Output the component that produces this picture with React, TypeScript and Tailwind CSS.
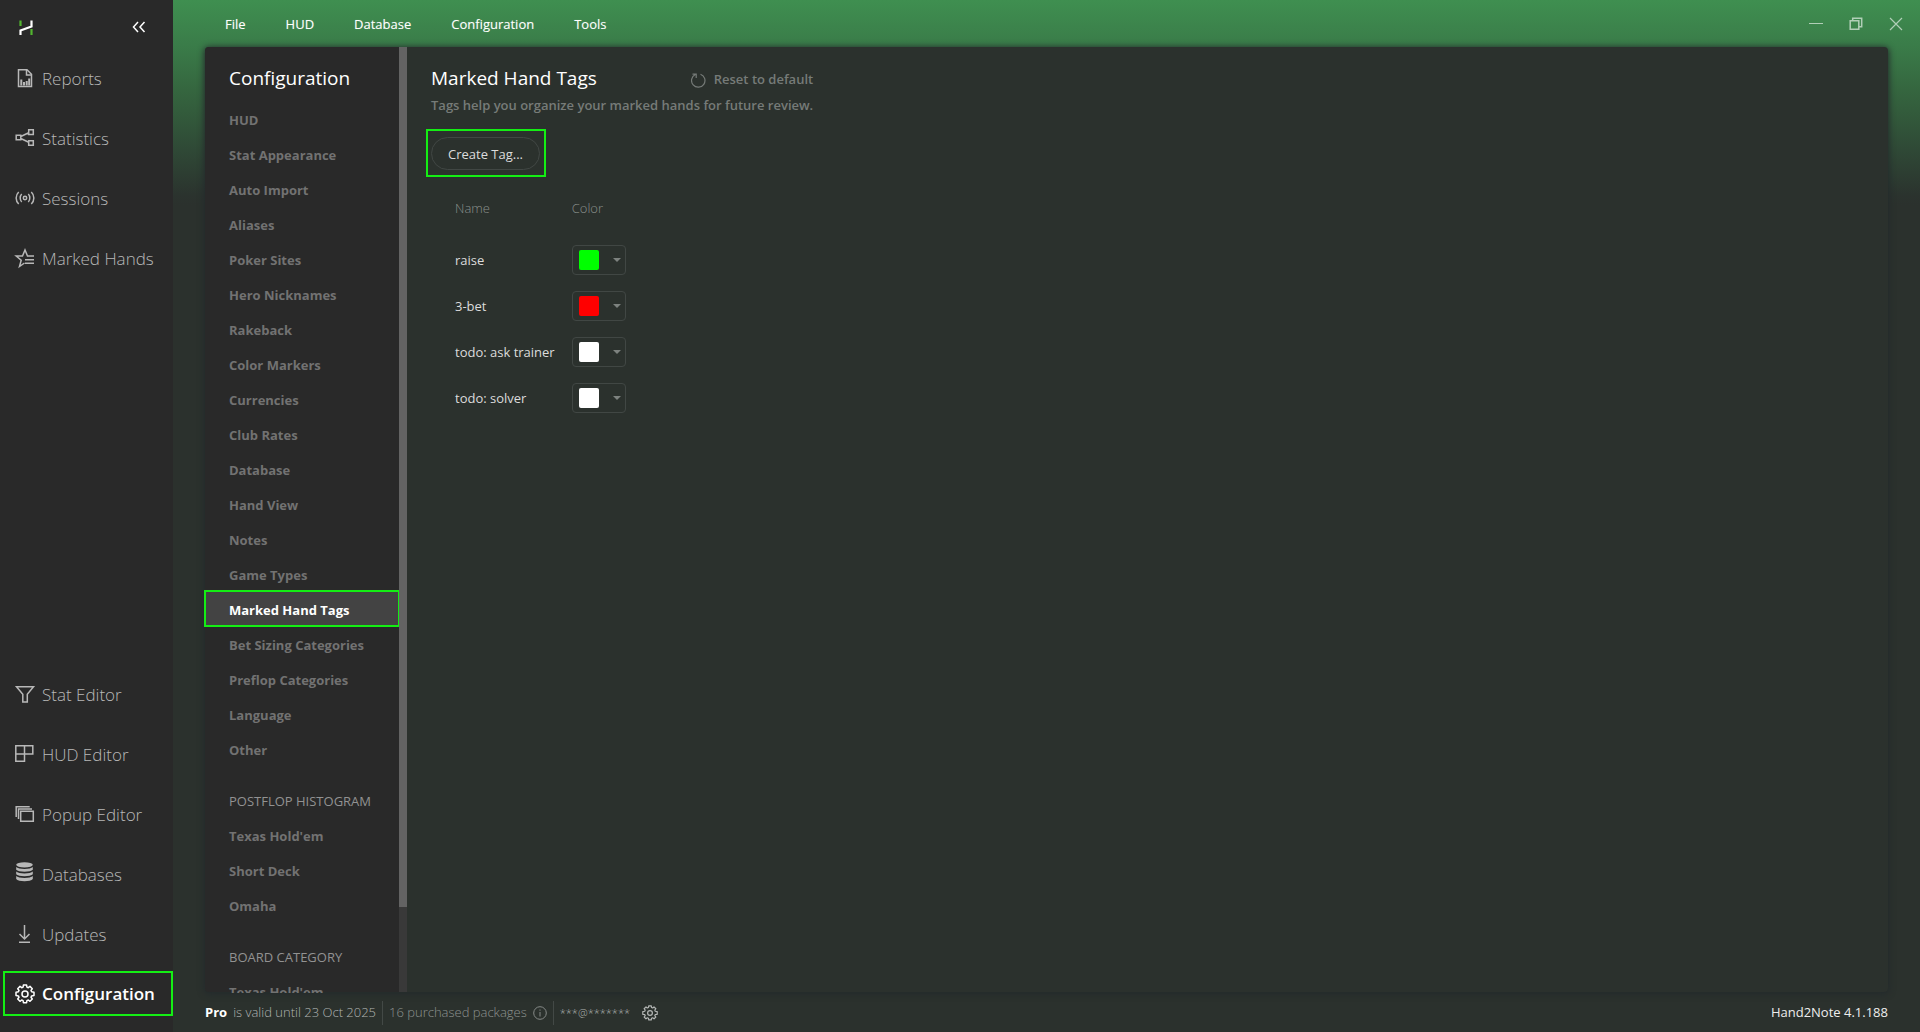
import React from "react";

type IconProps = { children: React.ReactNode; className?: string };

function Icon({ children, className = "h-5 w-5" }: IconProps) {
  return (
    <svg viewBox="0 0 20 20" className={"shrink-0 overflow-visible " + className} fill="none" stroke="currentColor" strokeWidth="1.5" aria-hidden="true">
      {children}
    </svg>
  );
}

const GEAR =
  "M8.4 1h3.2l.3 2.1 1.4.6 1.7-1.3 2.3 2.3-1.3 1.7.6 1.4 2.4.4v3.4l-2.4.3-.6 1.4 1.3 1.7-2.3 2.3-1.7-1.3-1.4.6-.3 2.1H8.4l-.3-2.1-1.4-.6L5 17.3 2.7 15 4 13.3l-.6-1.400L1 11.6V8.2l2.400-.4.6-1.4L2.7 4.7 5 2.4l1.7 1.3 1.4-.6z";

function GearIcon({ className }: { className?: string }) {
  return (
    <Icon className={className}>
      <path d={GEAR} strokeLinejoin="round" />
      <circle cx="10" cy="10" r="3" />
    </Icon>
  );
}

const topItems = [
  {
    label: "Reports",
    icon: (
      <Icon>
        <path d="M3.5.8h8.500l4.500 4.500v12.200h-13z" />
        <path d="M11.500 1v5h5" />
        <path d="M6.300 16.500v-6M9 16.500v-3.500M11.700 16.500v-4.500M14.200 16.500v-7" strokeWidth="2" />
      </Icon>
    ),
  },
  {
    label: "Statistics",
    icon: (
      <Icon>
        <path d="M1.200 6.200h4.600v4.600H1.200zM13.700.8h4.600v4.600h-4.600zM13.700 11.700h4.600v4.600h-4.600zM5.800 7.500l7.900-3.700M5.800 9.500l7.900 3.700" />
      </Icon>
    ),
  },
  {
    label: "Sessions",
    icon: (
      <Icon>
        <circle cx="10" cy="9" r="1.700" />
        <path d="M6.700 5c-2 2.200-2 5.800 0 8M13.300 5c2 2.200 2 5.800 0 8M3.700 3c-3.400 3.300-3.400 8.700 0 12M16.300 3c3.400 3.300 3.400 8.700 0 12" />
      </Icon>
    ),
  },
  {
    label: "Marked Hands",
    icon: (
      <Icon>
        <path d="M19 7h-6.500L10 1 7.500 7H1.200l5 4.200L4.500 17.500l5-3.500M10 10.700h9M10 14.300h9" />
      </Icon>
    ),
  },
];

const bottomItems = [
  {
    label: "Stat Editor",
    icon: (
      <Icon>
        <path d="M1.500 1.700h17l-6.200 7.500V17H7.800V9.200z" />
      </Icon>
    ),
  },
  {
    label: "HUD Editor",
    icon: (
      <Icon>
        <path d="M.8.8h17v8.200H.8zM.8 9v7.300h8.700V.8" />
      </Icon>
    ),
  },
  {
    label: "Popup Editor",
    icon: (
      <Icon>
        <path d="M5.700 6.200h12.600v10H5.700zM3.500 14V4h13.500M1.200 12V1.800h13.500" />
      </Icon>
    ),
  },
  {
    label: "Databases",
    icon: (
      <Icon>
        <g transform="translate(0 -3)" fill="currentColor" stroke="none">
          <ellipse cx="9.500" cy="2.800" rx="8.300" ry="2.600" />
          <path d="M1.200 5c2 2.600 14.600 2.600 16.600 0v2.800c-2 2.600-14.600 2.600-16.600 0zM1.200 9.500c2 2.600 14.600 2.600 16.600 0v2.700c-2 2.600-14.600 2.600-16.600 0zM1.200 14c2 2.600 14.600 2.600 16.600 0v3c-2 3-14.600 3-16.600 0z" />
        </g>
      </Icon>
    ),
  },
  {
    label: "Updates",
    icon: (
      <Icon>
        <path d="M9.500 0v14M4.500 9l5 5 5-5M4 17.300h11" />
      </Icon>
    ),
  },
];

const generalLinks = [
  "HUD", "Stat Appearance", "Auto Import", "Aliases", "Poker Sites", "Hero Nicknames", "Rakeback",
  "Color Markers", "Currencies", "Club Rates", "Database", "Hand View", "Notes", "Game Types",
  "Marked Hand Tags", "Bet Sizing Categories", "Preflop Categories", "Language", "Other",
];

const linkGroups = [
  { title: "POSTFLOP HISTOGRAM", links: ["Texas Hold'em", "Short Deck", "Omaha"] },
  { title: "BOARD CATEGORY", links: ["Texas Hold'em"] },
];

const tags = [
  { name: "raise", swatch: "bg-[#00ff00]" },
  { name: "3-bet", swatch: "bg-[#ff0000]" },
  { name: "todo: ask trainer", swatch: "bg-white" },
  { name: "todo: solver", swatch: "bg-white" },
];

function SideItem({ label, icon }: { label: string; icon: React.ReactNode }) {
  return (
    <li>
      <a href="#" className="flex h-[60px] items-center gap-[7px] pl-[15px] text-[17px] font-light text-[#b8b8b8]">
        {icon}
        {label}
      </a>
    </li>
  );
}

function Sidebar() {
  return (
    <aside className="flex w-[173px] shrink-0 flex-col bg-[#292929]">
      <div className="flex h-[49px] shrink-0 items-center justify-between pt-1 pr-[27px] pl-[18px]">
        <svg viewBox="0 0 16 16" className="h-4 w-4 overflow-visible" fill="none" strokeWidth="2.200" aria-label="Hand2Note" role="img">
          <path d="M2.500 1.500v5.500M13.500 10v6" stroke="#52b52f" />
          <path d="M2.500 16v-4.500l11-4V1.500" stroke="#ffffff" />
        </svg>
        <button aria-label="Collapse sidebar" className="text-white">
          <svg viewBox="0 0 14 12" className="h-3 w-3.5" fill="none" stroke="currentColor" strokeWidth="1.500" aria-hidden="true">
            <path d="M6 1 1.500 6 6 11M12.500 1 8 6l4.500 5" />
          </svg>
        </button>
      </div>
      <ul>
        {topItems.map((i) => (
          <SideItem key={i.label} {...i} />
        ))}
      </ul>
      <ul className="mt-auto">
        {bottomItems.map((i) => (
          <SideItem key={i.label} {...i} />
        ))}
      </ul>
      <a
        href="#"
        aria-current="page"
        className="mt-1.5 mb-4 ml-[3px] flex h-[45px] shrink-0 items-center gap-[7px] border-2 border-[#14ee14] pl-2.5 text-[17px] font-semibold text-white"
      >
        <GearIcon />
        Configuration
      </a>
    </aside>
  );
}

function TopBar() {
  return (
    <header className="flex h-[47px] shrink-0 items-center justify-between pr-[17px] pl-[52px] text-[13px] font-medium text-white">
      <nav className="flex gap-10 pt-0.5">
        {["File", "HUD", "Database", "Configuration", "Tools"].map((m) => (
          <button key={m} className="[text-shadow:0_0_1px_rgb(255_255_255/0.3)]">
            {m}
          </button>
        ))}
      </nav>
      <div className="flex items-center gap-[26px] text-white/60">
        <button aria-label="Minimize">
          <svg viewBox="0 0 14 14" className="h-3.5 w-3.5" stroke="currentColor" aria-hidden="true">
            <path d="M0 6.500h14" />
          </svg>
        </button>
        <button aria-label="Restore">
          <svg viewBox="0 0 14 14" className="h-3.5 w-3.5" fill="none" stroke="currentColor" strokeWidth="1.500" aria-hidden="true">
            <path d="M1.200 3.700h8.600v8.600H1.200zM3.700 3.500V1.200h9v8.600H10" />
          </svg>
        </button>
        <button aria-label="Close">
          <svg viewBox="0 0 14 14" className="h-3.5 w-3.5" stroke="currentColor" strokeWidth="1.200" aria-hidden="true">
            <path d="m1 1 12 12M13 1 1 13" />
          </svg>
        </button>
      </div>
    </header>
  );
}

function ConfigLink({ label }: { label: string }) {
  const active = label === "Marked Hand Tags";
  return (
    <li>
      <a
        href="#"
        aria-current={active ? "page" : undefined}
        className={
          active
            ? "flex h-[35px] items-center bg-[#434343] pt-1 pl-6 font-bold text-white outline-2 -outline-offset-1 outline-[#14ee14]"
            : "flex h-[35px] items-center pt-1 pl-6 font-bold text-[#727272]"
        }
      >
        {label}
      </a>
    </li>
  );
}

function ConfigNav() {
  return (
    <div className="flex min-h-0 w-[202px] shrink-0 rounded-l bg-[#292929] text-[13px]">
      <nav className="flex-1 overflow-clip [overflow-clip-margin:1px]">
        <h2 className="flex h-[54px] items-center pt-2 pl-6 text-[19px] text-white">Configuration</h2>
        <ul>
          {generalLinks.map((l) => (
            <ConfigLink key={l} label={l} />
          ))}
        </ul>
        {linkGroups.map((g) => (
          <section key={g.title} className="pt-4">
            <h3 className="flex h-[35px] items-center pt-1 pl-6 whitespace-nowrap text-[#929292]">{g.title}</h3>
            <ul>
              {g.links.map((l) => (
                <ConfigLink key={l} label={l} />
              ))}
            </ul>
          </section>
        ))}
      </nav>
      <div className="w-2 bg-[#393939]">
        <div className="h-[91%] bg-[#636363]" />
      </div>
    </div>
  );
}

function TagsPage() {
  return (
    <main className="flex-1 pt-4 pl-6 text-[13px]">
      <div className="w-fit">
        <div className="flex items-center justify-between">
          <h1 className="text-[19px] leading-[30px] text-white">Marked Hand Tags</h1>
          <button className="flex items-center gap-2 pt-1 font-semibold text-[#767b78]">
            <svg viewBox="0 0 15 15" className="h-[15px] w-[15px]" fill="none" stroke="currentColor" strokeWidth="1.200" aria-hidden="true">
              <path d="M9.500 1.200a6.700 6.700 0 1 1-5.200.3M1.500 1.200h3.700v3.700" />
            </svg>
            Reset to default
          </button>
        </div>
        <p className="leading-6 font-semibold text-[#767b78]">Tags help you organize your marked hands for future review.</p>
      </div>
      <div className="mt-3 -ml-[5px] w-fit border-2 border-[#14ee14] pt-1.5 pr-1 pb-[5px] pl-[3px]">
        <button className="h-[33px] rounded-full border border-[#414744] px-4 pt-0.5 text-[#dcdcdc]">Create Tag...</button>
      </div>
      <table className="mt-4 ml-6 text-left">
        <thead>
          <tr className="h-8 text-[#8a908c]">
            <th className="pr-[17px] font-light">Name</th>
            <th className="font-light">Color</th>
          </tr>
        </thead>
        <tbody>
          <tr className="h-3" aria-hidden="true">
            <td colSpan={2} />
          </tr>
          {tags.map((t) => (
            <tr key={t.name} className="h-[46px]">
              <td className="pt-0.5 pr-[17px] text-[#dcdcdc]">{t.name}</td>
              <td>
                <button
                  aria-label={"Color of " + t.name}
                  className="flex h-[30px] w-[54px] items-center justify-between rounded border border-[#414744] pr-1 pl-1.5"
                >
                  <span className={"h-5 w-5 rounded-xs " + t.swatch} />
                  <svg viewBox="0 0 8 4" className="h-1 w-2" fill="#7d827f" aria-hidden="true">
                    <path d="M0 0h8L4 4z" />
                  </svg>
                </button>
              </td>
            </tr>
          ))}
        </tbody>
      </table>
    </main>
  );
}

function StatusBar() {
  return (
    <footer className="flex h-10 shrink-0 items-center px-8 pt-0.5 text-[13px] font-light text-[#b0b4b2]">
      <strong className="mr-1.5 font-bold text-white">Pro</strong>
      <span>is valid until 23 Oct 2025</span>
      <span className="ml-1.5 h-6 w-px bg-[#434946]" />
      <span className="ml-1.5 text-[#8e9390]">16 purchased packages</span>
      <svg viewBox="0 0 14 14" className="ml-1.5 h-3.5 w-3.5" fill="none" stroke="#868a88" aria-label="Info" role="img">
        <circle cx="7" cy="7" r="6.300" />
        <path d="M7 6v4.500M7 3.500v1.200" />
      </svg>
      <span className="ml-1.5 h-6 w-px bg-[#434946]" />
      <span className="ml-1.5 text-[11px]">***@*******</span>
      <button aria-label="Account settings" className="ml-3 text-[#b4b7b5]">
        <GearIcon className="h-4 w-4" />
      </button>
      <span className="ml-auto font-medium text-[#eeeeee]">Hand2Note 4.1.188</span>
    </footer>
  );
}

export default function App() {
  return (
    <div className="flex h-screen overflow-hidden bg-[#2b312d] font-['Open_Sans',sans-serif]">
      <Sidebar />
      <div className="flex min-w-0 flex-1 flex-col bg-[linear-gradient(to_bottom,#3f8f50_0px,#3a7c49_45px,#35663f_90px,#2f4936_150px,#2b332e_195px,#2b312d_205px)]">
        <TopBar />
        <div className="mx-8 flex min-h-0 flex-1 rounded bg-[#2b312d] shadow-[0_1px_6px_1px_#232a2c]">
          <ConfigNav />
          <TagsPage />
        </div>
        <StatusBar />
      </div>
    </div>
  );
}
